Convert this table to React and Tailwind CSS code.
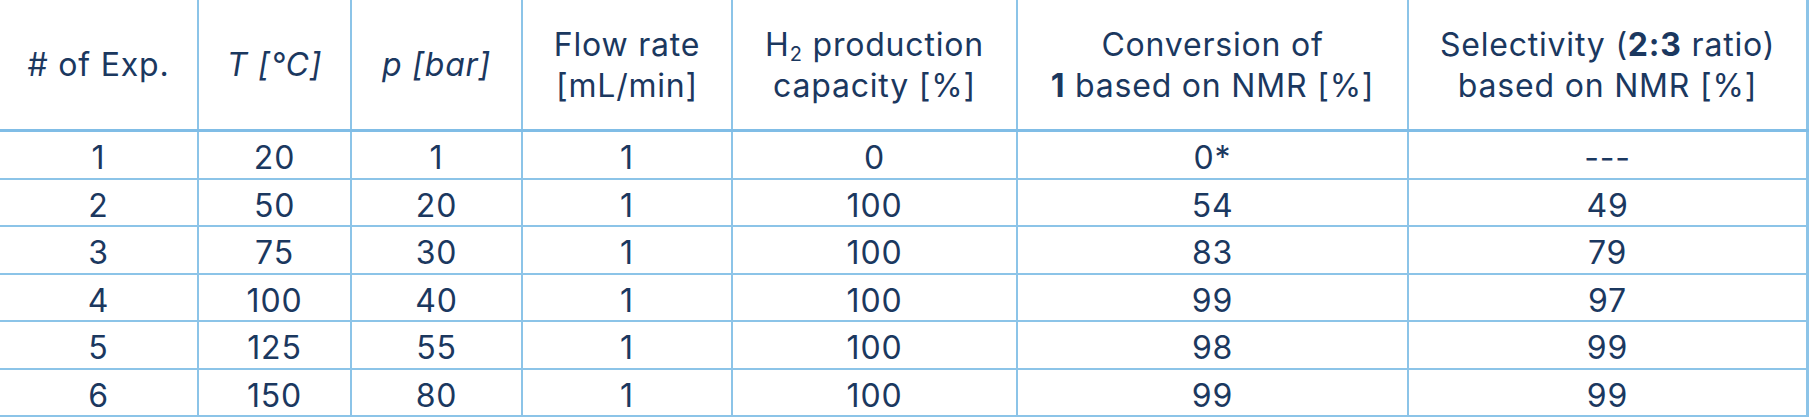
import React from "react";

const cols = "grid grid-cols-[199px_153px_171px_210px_285px_391px_400px]";

const rows = [
  ["1", "20", "1", "1", "0", "0*", "---"],
  ["2", "50", "20", "1", "100", "54", "49"],
  ["3", "75", "30", "1", "100", "83", "79"],
  ["4", "100", "40", "1", "100", "99", "97"],
  ["5", "125", "55", "1", "100", "98", "99"],
  ["6", "150", "80", "1", "100", "99", "99"],
];

function HCell({ children, last }) {
  return (
    <div
      className={
        "flex items-center justify-center text-center leading-[41px] border-[#8cc4e8] " +
        (last ? "border-r-[3px]" : "border-r-2")
      }
    >
      <div>{children}</div>
    </div>
  );
}

export default function App() {
  return (
    <div
      className="w-[1810px] h-[417px] bg-white text-[#1b385f] text-[32px] tracking-[0.025em]"
      style={{ fontFamily: "Inter, 'Liberation Sans', sans-serif" }}
    >
      <div className="w-[1809px]">
        <div className={cols + " h-[132px] border-b-[3px] border-[#80bde6]"}>
          <HCell>
            # of Exp.
          </HCell>
          <HCell>
            <span className="italic">T [°C]</span>
          </HCell>
          <HCell>
            <span className="italic">p [bar]</span>
          </HCell>
          <HCell>
            Flow rate
            <br />
            [mL/min]
          </HCell>
          <HCell>
            H<sub className="text-[20px] relative top-[5px]">2</sub> production
            <br />
            capacity [%]
          </HCell>
          <HCell>
            Conversion of
            <br />
            <b className="font-bold">1</b> based on NMR [%]
          </HCell>
          <HCell last>
            Selectivity (<b className="font-bold">2:3</b> ratio)
            <br />
            based on NMR [%]
          </HCell>
        </div>
        {rows.map((r, i) => (
          <div key={i} className={cols + " h-[47.5px] border-b-2 border-[#8cc4e8]"}>
            {r.map((c, j) => (
              <div
                key={j}
                className={
                  "flex items-center justify-center pt-[2px] border-[#8cc4e8] " +
                  (j === 6 ? "border-r-[3px]" : "border-r-2")
                }
              >
                {c}
              </div>
            ))}
          </div>
        ))}
      </div>
    </div>
  );
}
